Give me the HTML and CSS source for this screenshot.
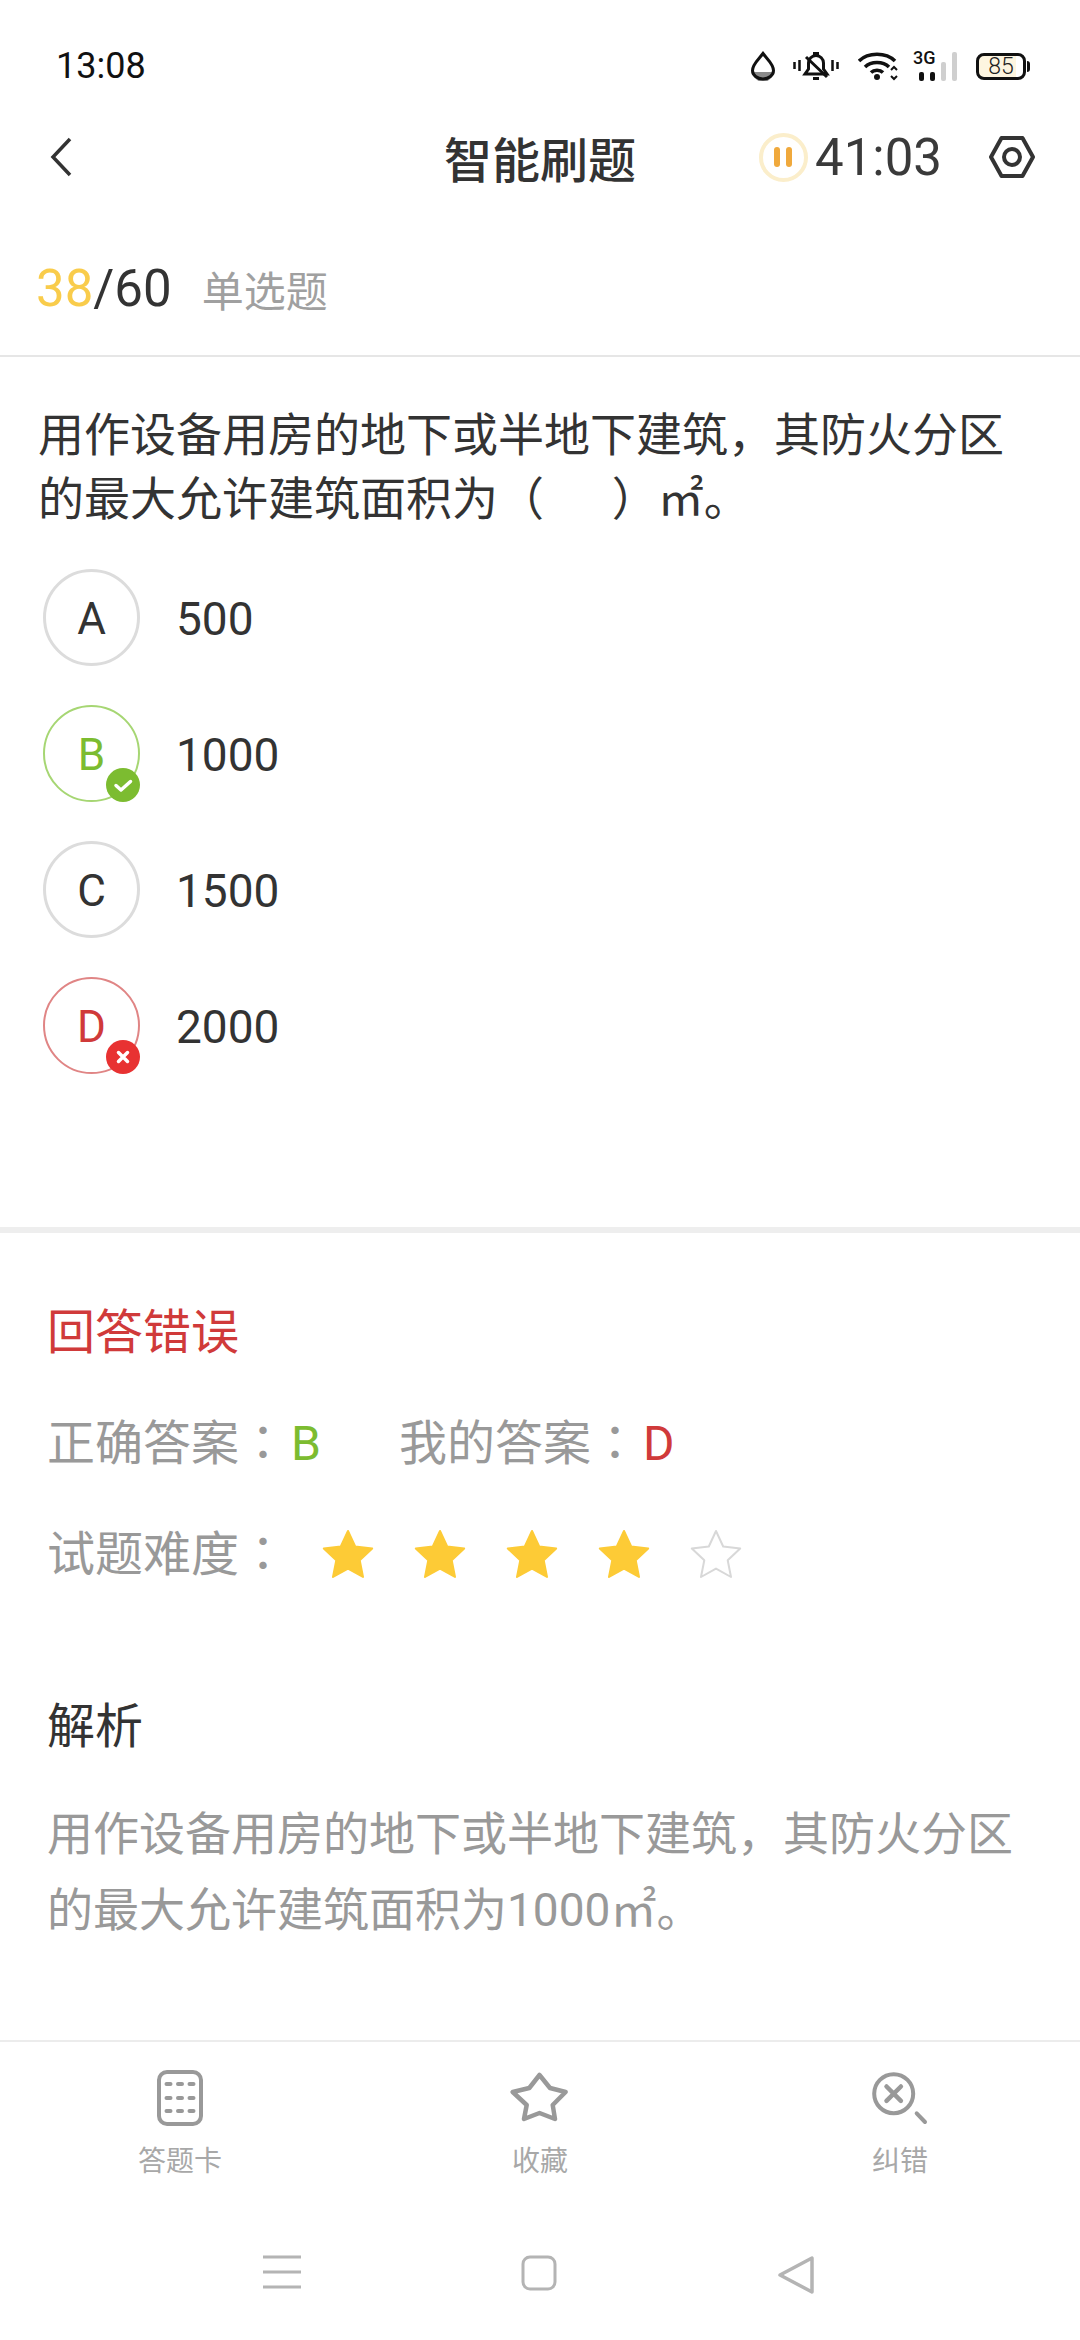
FILE: index.html
```html
<!DOCTYPE html>
<html lang="zh-CN">
<head>
  <meta charset="UTF-8" />
  <meta name="viewport" content="width=device-width, initial-scale=1" />
  <title>智能刷题</title>
  <link rel="stylesheet" href="styles.css">
</head>
<body>

  <!-- Barra de estado -->
  <div class="status-bar">
    <span class="clock">13:08</span>
    <div class="status-icons">
      <svg class="ic-drop" width="26" height="30" viewBox="0 0 26 30">
        <path d="M3 21a10 10 0 0 0 20 0z" fill="#8a8a8a"/>
        <path d="M13 2.500C9 8 2.500 13 2.500 19.500a10.500 8.500 0 0 0 21 0C23.500 13 17 8 13 2.500z" fill="none" stroke="#111" stroke-width="3"/>
      </svg>
      <svg class="ic-bell" width="46" height="30" viewBox="0 0 46 30">
        <path d="M1.500 11v7M6.500 9v11M39.500 9v11M44.500 11v7" stroke="#111" stroke-width="2.500" fill="none"/>
        <path d="M12 23h22l-3.500-5v-6a7.500 7.500 0 0 0-15 0v6z" fill="none" stroke="#111" stroke-width="3"/>
        <path d="M20 2.500h6M20 27.500h6M13 6l21 20" stroke="#111" stroke-width="3" fill="none"/>
      </svg>
      <svg class="ic-wifi" width="40" height="30" viewBox="0 0 40 30">
        <path d="M1 10C10 1 28 1 37 10M7 16c6-6 18-6 24 0M13 21.500c3-3 9-3 12 0" fill="none" stroke="#111" stroke-width="3.500"/>
        <circle cx="19" cy="26" r="3" fill="#111"/>
        <path d="M33 19l3-3 3 3M33 25l3 3 3-3" fill="none" stroke="#111" stroke-width="2"/>
      </svg>
      <div class="signal">
        <span class="net">3G</span>
        <i class="bar on"></i><i class="bar on"></i><i class="bar tall"></i><i class="bar taller"></i>
      </div>
      <div class="battery"><span class="level">85</span></div>
    </div>
  </div>

  <header class="top-bar">
    <svg class="back" width="22" height="40" viewBox="0 0 22 40">
      <path d="M20 2L3 20l17 18" fill="none" stroke="#333" stroke-width="3.500"/>
    </svg>
    <h1 class="title">智能刷题</h1>
    <div class="timer">
      <span class="pause"><i></i><i></i></span>
      <span class="time">41:03</span>
    </div>
    <svg class="nut" width="48" height="44" viewBox="0 0 48 44">
      <path d="M13.500 3h21L45 22 34.500 41h-21L3 22z" fill="none" stroke="#333" stroke-width="4" stroke-linejoin="round"/>
      <circle cx="24" cy="22" r="8" fill="none" stroke="#333" stroke-width="4"/>
    </svg>
  </header>

  <div class="progress">
    <span class="count"><b>38</b>/60</span>
    <span class="kind">单选题</span>
  </div>

  <section class="question">
    <p class="stem">用作设备用房的地下或半地下建筑，其防火分区的最大允许建筑面积为（&emsp;&nbsp;&thinsp;）㎡。</p>
    <ul class="options">
      <li class="option">
        <span class="letter">A</span><span class="value">500</span>
      </li>
      <li class="option right">
        <span class="letter">B
          <svg class="mark" width="34" height="34" viewBox="0 0 34 34">
            <circle cx="17" cy="17" r="17" fill="#7cbc30"/>
            <path d="M10 17.500l5 4.500 9.500-8.500" fill="none" stroke="#fff" stroke-width="3.500" stroke-linecap="round" stroke-linejoin="round"/>
          </svg>
        </span><span class="value">1000</span>
      </li>
      <li class="option">
        <span class="letter">C</span><span class="value">1500</span>
      </li>
      <li class="option wrong">
        <span class="letter">D
          <svg class="mark" width="34" height="34" viewBox="0 0 34 34">
            <circle cx="17" cy="17" r="17" fill="#e83232"/>
            <path d="M12.500 12.500l9 9M21.500 12.500l-9 9" fill="none" stroke="#fff" stroke-width="3.500" stroke-linecap="round"/>
          </svg>
        </span><span class="value">2000</span>
      </li>
    </ul>
  </section>

  <section class="result">
    <h2 class="verdict">回答错误</h2>
    <div class="answers">
      <span class="answer">正确答案<span class="colon" lang="zh-TW">：</span><em class="ok">B</em></span>
      <span class="answer">我的答案<span class="colon" lang="zh-TW">：</span><em class="bad">D</em></span>
    </div>
    <div class="level-row">
      <span>试题难度<span class="colon" lang="zh-TW">：</span></span>
      <div class="stars">
        <svg class="star" viewBox="0 0 52 52"><path d="M26 2l7.200 15.500 17 2-12.500 11.700 3.300 16.800L26 39.600 11 48l3.300-16.800L1.800 19.500l17-2z" fill="#fdcb36" stroke="#fdcb36" stroke-width="2" stroke-linejoin="round"/></svg>
        <svg class="star" viewBox="0 0 52 52"><path d="M26 2l7.200 15.500 17 2-12.500 11.700 3.300 16.800L26 39.600 11 48l3.300-16.800L1.800 19.500l17-2z" fill="#fdcb36" stroke="#fdcb36" stroke-width="2" stroke-linejoin="round"/></svg>
        <svg class="star" viewBox="0 0 52 52"><path d="M26 2l7.200 15.500 17 2-12.500 11.700 3.300 16.800L26 39.600 11 48l3.300-16.800L1.800 19.500l17-2z" fill="#fdcb36" stroke="#fdcb36" stroke-width="2" stroke-linejoin="round"/></svg>
        <svg class="star" viewBox="0 0 52 52"><path d="M26 2l7.200 15.500 17 2-12.500 11.700 3.300 16.800L26 39.600 11 48l3.300-16.800L1.800 19.500l17-2z" fill="#fdcb36" stroke="#fdcb36" stroke-width="2" stroke-linejoin="round"/></svg>
        <svg class="star" viewBox="0 0 52 52"><path d="M26 2l7.200 15.500 17 2-12.500 11.700 3.300 16.800L26 39.600 11 48l3.300-16.800L1.800 19.500l17-2z" fill="none" stroke="#d8d8d8" stroke-width="2" stroke-linejoin="round"/></svg>
      </div>
    </div>
    <h3 class="note-title">解析</h3>
    <p class="note">用作设备用房的地下或半地下建筑，其防火分区的最大允许建筑面积为1000㎡。</p>
  </section>

  <!-- Barra inferior -->
  <footer class="tabs">
    <div class="tab">
      <svg width="48" height="56" viewBox="0 0 48 56">
        <rect x="3" y="2" width="42" height="52" rx="8" fill="none" stroke="#999" stroke-width="4"/>
        <path d="M10.500 14h4M22 14h4M33.500 14h4M10.500 28h4M22 28h4M33.500 28h4M10.500 41h4M22 41h4M33.500 41h4" fill="none" stroke="#999" stroke-width="4" stroke-linecap="round"/>
      </svg>
      <span>答题卡</span>
    </div>
    <div class="tab">
      <svg width="60" height="56" viewBox="0 0 60 56">
        <path d="M29.500 5L40 18l15.600 4-12.900 13L45 49l-15.500-6L14 49l2.700-14L2.700 22l16.600-4z" fill="none" stroke="#999" stroke-width="4.500" stroke-linejoin="round"/>
      </svg>
      <span>收藏</span>
    </div>
    <div class="tab">
      <svg width="56" height="56" viewBox="0 0 56 56">
        <circle cx="21.700" cy="23.700" r="19.500" fill="none" stroke="#999" stroke-width="4"/>
        <path d="M14.500 16.500l14.400 14.400M28.900 16.500L14.500 30.900" fill="none" stroke="#999" stroke-width="4.500" stroke-linecap="round"/>
        <path d="M44.700 43.300L53 52" fill="none" stroke="#999" stroke-width="4" stroke-linecap="round"/>
      </svg>
      <span>纠错</span>
    </div>
  </footer>

  <nav class="nav-bar">
    <svg width="38" height="34" viewBox="0 0 38 34">
      <path d="M0 2h38M0 17h38M0 32h38" fill="none" stroke="#b4b4b4" stroke-width="3"/>
    </svg>
    <svg width="36" height="36" viewBox="0 0 36 36">
      <rect x="2" y="2" width="32" height="32" rx="7" fill="none" stroke="#b4b4b4" stroke-width="3"/>
    </svg>
    <svg width="38" height="40" viewBox="0 0 38 40">
      <path d="M35 3v34L3 20z" fill="none" stroke="#b4b4b4" stroke-width="3.500" stroke-linejoin="round"/>
    </svg>
  </nav>

</body>
</html>
```

FILE: styles.css
```css
* {
  margin: 0;
  padding: 0;
  box-sizing: border-box;
}

body {
  width: 1080px;
  height: 2340px;
  display: flex;
  flex-direction: column;
  font-family: Roboto, 'Noto Sans CJK SC', sans-serif;
  background: #fff;
  color: #333;
  overflow: hidden;
}

.status-bar {
  height: 114px;
  padding: 18px 54px 0 56px;
  display: flex;
  align-items: center;
  justify-content: space-between;
  flex-shrink: 0;
}

.clock {
  font-size: 36px;
  color: #111;
}

.status-icons {
  display: flex;
  align-items: center;
}

.ic-drop { margin-right: 17px; }
.ic-bell { margin-right: 19px; }
.ic-wifi { margin-right: 15px; }

.signal {
  width: 44px;
  height: 30px;
  margin-right: 19px;
  padding-left: 6px;
  position: relative;
  display: flex;
  align-items: flex-end;
  gap: 6px;
}

.net {
  position: absolute;
  left: 0;
  top: -2px;
  font-size: 18px;
  font-weight: 500;
  line-height: 18px;
  color: #111;
}

.bar {
  display: block;
  width: 5px;
  height: 9px;
  border-radius: 2px;
  background: #cfcfcf;
}

.bar.on { background: #111; }
.bar.tall { height: 19px; }
.bar.taller { height: 29px; }

.battery {
  width: 50px;
  height: 27px;
  border: 3px solid #111;
  border-radius: 8px;
  background: linear-gradient(to right, #fdf5e0 85%, #fff 85%);
  position: relative;
  display: flex;
  align-items: center;
  justify-content: center;
}

.battery::after {
  content: '';
  position: absolute;
  right: -7px;
  top: 5px;
  width: 3px;
  height: 11px;
  border-radius: 0 3px 3px 0;
  background: #111;
}

.level {
  font-size: 23px;
  font-weight: 300;
  line-height: 21px;
  color: #222;
}

.top-bar {
  height: 86px;
  position: relative;
  display: flex;
  align-items: center;
  flex-shrink: 0;
  padding: 0 44px 0 50px;
}

.title {
  position: absolute;
  left: 0;
  right: 0;
  text-align: center;
  font-size: 48px;
  font-weight: 500;
  color: #333;
}

.timer {
  margin-left: auto;
  margin-right: 46px;
  display: flex;
  align-items: center;
  gap: 7px;
  position: relative;
}

.pause {
  width: 49px;
  height: 49px;
  border: 4px solid #fbeecb;
  border-radius: 50%;
  display: flex;
  align-items: center;
  justify-content: center;
  gap: 6px;
}

.pause i {
  display: block;
  width: 6px;
  height: 20px;
  border-radius: 3px;
  background: #f0a93c;
}

.time {
  font-size: 51px;
  color: #3a3a3a;
}

.progress {
  height: 157px;
  padding: 22px 36px 0;
  display: flex;
  align-items: center;
  gap: 30px;
  flex-shrink: 0;
  border-bottom: 2px solid #e6e6e6;
}

.count {
  font-size: 51px;
  color: #333;
}

.count b {
  font-weight: 400;
  color: #f9cc4b;
}

.kind {
  font-size: 42px;
  color: #a0a0a0;
}

.question {
  height: 876px;
  padding: 46px 38px 0;
  flex-shrink: 0;
  border-bottom: 6px solid #eeeeee;
}

.stem {
  font-size: 46px;
  line-height: 64px;
  color: #333;
}

.options {
  list-style: none;
  margin-top: 38px;
  display: flex;
  flex-direction: column;
  gap: 39px;
}

.option {
  height: 97px;
  display: flex;
  align-items: center;
  gap: 36px;
  font-size: 46px;
  color: #333;
}

.value {
  padding-top: 2px;
}

.letter {
  width: 97px;
  height: 97px;
  margin-left: 5px;
  padding-top: 2px;
  position: relative;
  display: flex;
  align-items: center;
  justify-content: center;
  border: 3px solid #dcdcdc;
  border-radius: 50%;
  font-size: 44px;
}

.right .letter {
  border: 2px solid #a6d673;
  color: #7cbc30;
}

.wrong .letter {
  border: 2px solid #e08585;
  color: #d03a3a;
}

.mark {
  position: absolute;
  right: -2px;
  bottom: -2px;
}

.result {
  flex: 1;
  padding: 65px 47px 0;
}

.verdict {
  font-size: 48px;
  line-height: 70px;
  font-weight: 400;
  color: #d03a3a;
}

.answers {
  margin-top: 41px;
  display: flex;
  gap: 78px;
  font-size: 48px;
  line-height: 70px;
  color: #999;
}

/* los dos puntos van centrados en su celda */
.colon {
  font-family: 'Noto Sans CJK TC', sans-serif;
  line-height: 0;
}

.answer em {
  font-style: normal;
  margin-left: 4px;
}

.ok { color: #7cbc30; }
.bad { color: #d03a3a; }

.level-row {
  margin-top: 41px;
  display: flex;
  align-items: center;
  font-size: 48px;
  line-height: 70px;
  color: #999;
}

.stars {
  margin-left: 35px;
  display: flex;
  gap: 40px;
}

.star {
  width: 52px;
  height: 52px;
  display: block;
}

.note-title {
  margin-top: 102px;
  font-size: 48px;
  line-height: 70px;
  font-weight: 400;
  color: #333;
}

.note {
  margin-top: 34px;
  font-size: 46px;
  line-height: 76px;
  color: #999;
}

.tabs {
  height: 190px;
  display: flex;
  flex-shrink: 0;
  padding-top: 28px;
  border-top: 2px solid #ececec;
  justify-content: space-between;
}

.tab {
  width: 360px;
  display: flex;
  flex-direction: column;
  align-items: center;
  gap: 18px;
  font-size: 28px;
  line-height: 36px;
  color: #a8a8a8;
}

.nav-bar {
  height: 110px;
  flex-shrink: 0;
  display: flex;
  align-items: flex-start;
  justify-content: space-between;
  padding: 25px 265px 0 263px;
}
```
